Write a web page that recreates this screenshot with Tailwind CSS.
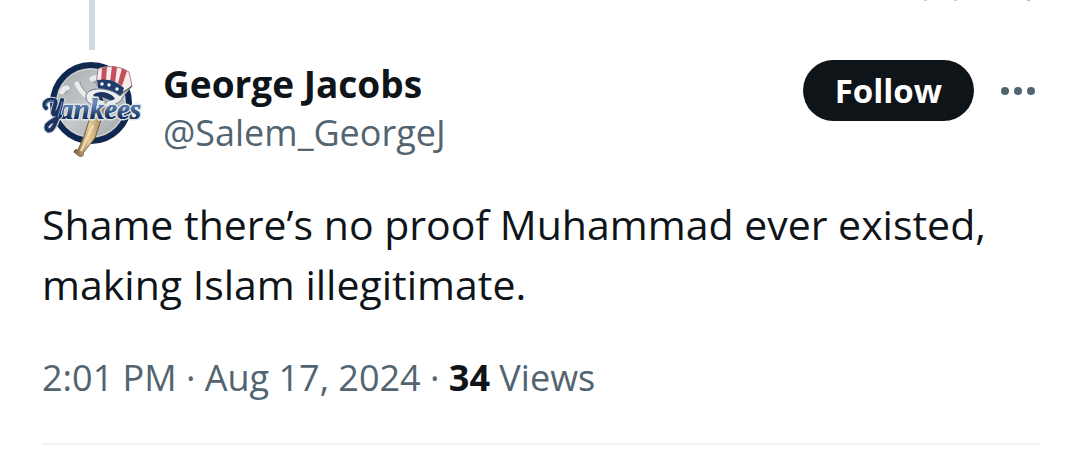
<!DOCTYPE html>
<html lang="en">
<head>
  <meta charset="UTF-8" />
  <meta name="viewport" content="width=device-width, initial-scale=1.0" />
  <title>George Jacobs on X</title>
  <script src="https://cdn.jsdelivr.net/npm/@tailwindcss/browser@4"></script>
</head>
<body class="bg-white font-['Open_Sans',sans-serif] text-[#0f1419]">
  <article class="pl-[42px] pr-10">
    <!-- end of the thread line, with the tail of the post above -->
    <div class="flex justify-between h-[50px] mb-[10px]">
      <div class="w-[100px] flex justify-center">
        <div class="w-[6px] bg-[#cfd9de]"></div>
      </div>
      <svg class="w-[120px] h-[2px]" viewBox="0 0 120 2" fill="#b4bbbf" aria-hidden="true">
        <path d="M4 0h3l-1 1h-1zM34 0h3l-1 1h-1zM107 0h3v1h-3z" />
      </svg>
    </div>

    <header class="flex items-start">
      <svg class="w-[100px] h-[100px] shrink-0" viewBox="0 0 100 100" role="img" aria-label="Profile picture">
        <defs>
          <linearGradient id="ball" x1="0" y1="0" x2="1" y2="1">
            <stop offset="0" stop-color="#a4a8ab" />
            <stop offset=".5" stop-color="#c6c8ca" />
            <stop offset="1" stop-color="#9fa4a8" />
          </linearGradient>
          <linearGradient id="bat" x1="0" y1="0" x2="1" y2="0">
            <stop offset="0" stop-color="#7d5c35" />
            <stop offset=".45" stop-color="#e6cb98" />
            <stop offset="1" stop-color="#8d6a3e" />
          </linearGradient>
          <linearGradient id="letters" x1="0" y1="0" x2="0" y2="1">
            <stop offset=".35" stop-color="#6288bd" />
            <stop offset=".75" stop-color="#1b335f" />
          </linearGradient>
        </defs>
        <circle cx="49" cy="43" r="38" fill="url(#ball)" stroke="#10284f" stroke-width="6" />
        <circle cx="49" cy="43" r="34" fill="none" stroke="#d6d9db" stroke-width="1" />
        <!-- stitching on the ball -->
        <path d="M35 24c2 4 5 8 8 11M20 32c1-3 3-4 5-4M50 19c4-3 6-1 7 2" fill="none" stroke="#e9ebec" stroke-width="5" stroke-linecap="round" />
        <path d="M38 22c1 5 4 9 8 12M23 34l4-4M51 22l5 1" fill="none" stroke="#8d9296" stroke-width="1" />
        <!-- bat -->
        <path d="M55 36l11 3-13 39-12 15c1 3-1 4-4 3l-5-4c0-2 2-3 4-2l6-14z" fill="url(#bat)" stroke="#76613f" stroke-width="1" />
        <path d="M51 65L39 91" stroke="#f3dfb8" stroke-width="2" />
        <!-- hat -->
        <path d="M56 9c8-4 23-3 31 3l3 14-9 8c-8-6-18-9-27-9z" fill="#f5eeee" stroke="#a88087" stroke-width="1" />
        <path d="M60 8l5-1-1 14-5 1zM70 6l5 1-2 16-5-1zM80 8l5 3-5 15-4-3z" fill="#c54f5d" />
        <path d="M55 20c10-2 20 1 27 8l-3 10-23-10z" fill="#203d6d" />
        <g fill="#fff"><circle cx="60" cy="24" r="1.7" /><circle cx="67" cy="25" r="1.7" /><circle cx="75" cy="29" r="1.7" /></g>
        <path d="M90 26L78 36C66 26 45 27 44 36c-1 9 13 13 24 10 8-2 12-6 12-8z" fill="#eceeef" stroke="#687786" stroke-width="1" />
        <path d="M90 26L77 35" stroke="#5b4a4a" stroke-width="1" />
        <path d="M51 35c7-6 19-2 22 4-8 4-18 2-22-4z" fill="#1c355e" />
        <path d="M60 37l8 3-5 5z" fill="#a8adb2" />
        <!-- wordmark -->
        <text x="17" y="59" font-family="Liberation Serif, serif" font-style="italic" font-weight="700" font-size="29" fill="#10284f" stroke="#dfe4e9" stroke-width="3" stroke-linejoin="round" paint-order="stroke">ankees</text>
        <text x="17" y="59" font-family="Liberation Serif, serif" font-style="italic" font-weight="700" font-size="29" fill="url(#letters)" aria-hidden="true">ankees</text>
        <g fill="none" stroke-linecap="round" stroke-linejoin="round">
          <path id="y" d="M4 48c-4-5 1-9 8-8 4 1-1 9-1 13 1 4 6 0 9-13-3 12-5 24-10 29-3 3-7 1-5-4 3-4 8-5 13-9" stroke="#c9d0d8" stroke-width="6" />
          <path d="M4 48c-4-5 1-9 8-8 4 1-1 9-1 13 1 4 6 0 9-13-3 12-5 24-10 29-3 3-7 1-5-4 3-4 8-5 13-9" stroke="#1b335f" stroke-width="4" />
          <path d="M4 46c-1-4 3-6 8-5M20 42l-4 15" stroke="#6f93c2" stroke-width="1" />
        </g>
      </svg>

      <div class="ml-[21px] flex-1 min-w-0 leading-[50px]">
        <h1 class="text-[37px] leading-[48px] font-bold">George Jacobs</h1>
        <a href="#" class="block text-[36px] text-[#536471]">@Salem_GeorgeJ</a>
      </div>

      <button type="button" class="h-[61px] px-8 rounded-full bg-[#0f1419] text-white text-[33px] leading-[60px] font-bold">Follow</button>
      <button type="button" aria-label="More" class="ml-[26px] mr-1 h-[61px]">
        <svg class="w-[36px] h-[10px]" viewBox="0 0 36 10" fill="#536471">
          <circle cx="5" cy="5" r="4" />
          <circle cx="18" cy="5" r="4" />
          <circle cx="31" cy="5" r="4" />
        </svg>
      </button>
    </header>

    <p class="mt-[34px] text-[41px] leading-[60px]">Shame there’s no proof Muhammad ever existed, making Islam illegitimate.</p>

    <div class="mt-[39px] pb-10 border-b-2 border-[#eff1f2] text-[36px] leading-[50px] text-[#536471]">
      <time datetime="2024-08-17T14:01">2:01 PM · Aug 17, 2024</time> · <a href="#"><b class="text-[#0f1419]">34</b> Views</a>
    </div>
  </article>
</body>
</html>
